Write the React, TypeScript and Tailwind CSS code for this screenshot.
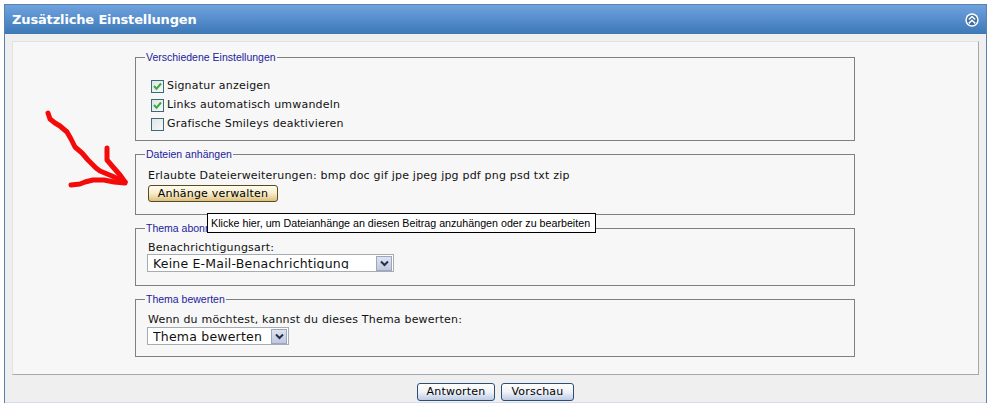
const dejavu = 'font-["DejaVu_Sans",sans-serif]';

const Check = ({ checked, label }: { checked?: boolean; label: string }) => (
  <div className="flex h-[19px] items-center">
    <span className="flex h-[13px] w-[13px] items-center justify-center border border-[#3c6a78] bg-gradient-to-br from-[#dfe6e6] to-[#f6f8f8]">
      {checked && (
        <svg width="9" height="9" viewBox="0 0 9 9">
          <path d="M1 4 L3.5 6.8 L8 1.5" fill="none" stroke="#3aa83a" strokeWidth="2" />
        </svg>
      )}
    </span>
    <span className="ml-[3px]">{label}</span>
  </div>
);

const Group = ({ title, h, children }: { title: string; h: string; children: React.ReactNode }) => (
  <fieldset className={`${h} border border-[#808080] pl-[10px]`}>
    <legend className="ml-[-1px] px-[1px] font-['Liberation_Sans',sans-serif] text-[10.5px] leading-[13px] tracking-normal text-[#22229c]">
      {title}
    </legend>
    {children}
  </fieldset>
);

const Arrow = () => (
  <svg className="absolute left-[40px] top-[105px]" width="95" height="90" viewBox="40 105 95 90">
    <g fill="none" stroke="#f50a0a" strokeWidth="5" strokeLinecap="round" strokeLinejoin="round">
      <path d="M48 113 L50 119 L55 123 L60 126 L67 132 L71 139 L75 147 L82 153 L88 160 L96 168 L100 171 L112 176 L125 182" />
      <path d="M107 148 L107 160 L113 167 L120 175 L125 182" />
      <path d="M71 185 L80 184 L85 182 L93 180 L104 180 L114 182 L125 183" />
    </g>
  </svg>
);

const Select = ({ label, w, clip }: { label: string; w: string; clip?: boolean }) => (
  <div className={`${w} flex h-[18px] items-center justify-between overflow-hidden border border-[#a5acb2] bg-white pl-[5px] pr-[1px]`}>
    <span className={`${clip ? 'h-[14px]' : 'h-[16px]'} self-start overflow-hidden pt-[1px] text-[12.5px] leading-[15px]`}>{label}</span>
    <span className="flex h-[15px] w-[16px] items-center justify-center border border-[#9aa7c4] bg-gradient-to-b from-[#dfe3ee] to-[#c0c8dc]">
      <svg width="9" height="7" viewBox="0 0 9 7">
        <path d="M1 1.5 L4.5 5 L8 1.5" fill="none" stroke="#22304f" strokeWidth="2" />
      </svg>
    </span>
  </div>
);

const Btn = ({ label, w }: { label: string; w: string }) => (
  <button className={`${w} h-[18px] rounded-[3px] border border-[#2e4f74] bg-gradient-to-b from-[#ffffff] via-[#f0f2f8] to-[#bccbe4] text-[11px] leading-[15px] text-black`}>
    {label}
  </button>
);

export default function App() {
  return (
    <div className={`relative h-[408px] w-[989px] overflow-hidden bg-white pl-[4px] pr-[2px] pt-[4px] text-[11px] tracking-[0.2px] text-[#111] ${dejavu}`}>
      <div className="border border-b-0 border-[#5b82ad]">
        {/* Header */}
        <div className="flex h-[29px] items-center justify-between bg-gradient-to-b from-[#6fa3df] to-[#3c78b6] pl-[7px] pr-[7px] pt-[1px]">
          <h2 className="text-[13px] font-bold tracking-[-0.15px] text-white">Zusätzliche Einstellungen</h2>
          <svg width="14" height="14" viewBox="0 0 13 13">
            <circle cx="6.5" cy="6.5" r="6.2" fill="#fff" />
            <circle cx="6.5" cy="6.5" r="4.8" fill="#3f6f9e" />
            <path d="M3.5 6 L6.5 3.2 L9.5 6 M3.5 9.6 L6.5 6.8 L9.5 9.6" fill="none" stroke="#fff" strokeWidth="1.4" />
          </svg>
        </div>

        {/* Body */}
        <div className="bg-[#efefef] pl-[7px] pr-[7px] pt-[7px]">
          <div className="h-[334px] border border-[#e2e2e2] border-b-[#a8a8a8] border-r-[#a8a8a8] bg-[#f7f7f7] pl-[122px] pr-[123px] pt-[9px]">
            <div className="flex flex-col gap-[7px]">
              <Group title="Verschiedene Einstellungen" h="h-[90px]">
                <div className="flex flex-col pl-[5px] pt-[13px]">
                  <Check checked label="Signatur anzeigen" />
                  <Check checked label="Links automatisch umwandeln" />
                  <Check label="Grafische Smileys deaktivieren" />
                </div>
              </Group>
              <Group title="Dateien anhängen" h="h-[67px]">
                <div className="pl-[2px] pt-[7px] leading-[16px]">Erlaubte Dateierweiterungen: bmp doc gif jpe jpeg jpg pdf png psd txt zip</div>
                <button className="ml-[2px] mt-[1px] block h-[17px] w-[130px] rounded-[3px] border border-[#5a4a20] bg-gradient-to-b from-[#fffdf2] via-[#f6ecc8] to-[#dcc080] text-[11px] leading-[15px] text-black">
                  Anhänge verwalten
                </button>
              </Group>
              <Group title="Thema abonnieren" h="h-[64px]">
                <div className="pl-[2px] pt-[6px] leading-[13px]">Benachrichtigungsart:</div>
                <div className="pl-[1px]">
                  <Select label="Keine E-Mail-Benachrichtigung" w="w-[247px]" clip />
                </div>
              </Group>
              <Group title="Thema bewerten" h="h-[64px]">
                <div className="pl-[2px] pt-[6px] leading-[15px]">Wenn du möchtest, kannst du dieses Thema bewerten:</div>
                <div className="pl-[1px]">
                  <Select label="Thema bewerten" w="w-[142px]" />
                </div>
              </Group>
            </div>
          </div>
        </div>

        {/* Footer */}
        <div className="flex h-[28px] items-center justify-center gap-[6px] border-b border-[#d8d8f0] bg-[#efefef] pt-[6px]">
          <Btn label="Antworten" w="w-[78px]" />
          <Btn label="Vorschau" w="w-[73px]" />
        </div>
      </div>

      <Arrow />

      {/* Tooltip */}
      <div className="absolute left-[207px] top-[213px] h-[20px] w-[389px] whitespace-nowrap border border-black bg-white pl-[3px] font-['Liberation_Sans',sans-serif] text-[10.7px] leading-[19px] tracking-normal text-black">
        Klicke hier, um Dateianhänge an diesen Beitrag anzuhängen oder zu bearbeiten
      </div>
    </div>
  );
}
